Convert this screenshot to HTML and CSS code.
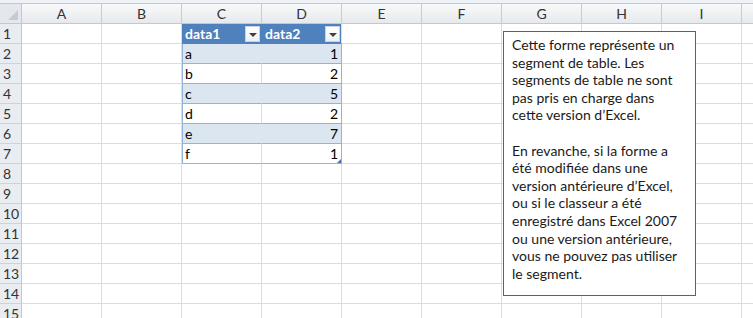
FILE: index.html
```html
<!DOCTYPE html>
<html lang="fr">
<head>
<meta charset="utf-8">
<title>Feuille</title>
<link rel="stylesheet" href="styles.css">
</head>
<body>
<div class="sheet">
  <div class="topstrip"></div>
  <div class="grid">
    <div class="corner"><span class="tri"></span></div>
    <div class="colh">A</div><div class="colh">B</div><div class="colh">C</div><div class="colh">D</div><div class="colh">E</div><div class="colh">F</div><div class="colh">G</div><div class="colh">H</div><div class="colh">I</div><div class="colh"></div>

    <div class="rowh">1</div><div class="cell"></div><div class="cell"></div>
    <div class="cell th tl"><span>data1</span><span class="dd"></span></div>
    <div class="cell th tr"><span>data2</span><span class="dd"></span></div>
    <div class="cell"></div><div class="cell"></div><div class="cell"></div><div class="cell"></div><div class="cell"></div><div class="cell"></div>

    <div class="rowh">2</div><div class="cell"></div><div class="cell"></div>
    <div class="cell td band tl">a</div><div class="cell td band num tr">1</div>
    <div class="cell"></div><div class="cell"></div><div class="cell"></div><div class="cell"></div><div class="cell"></div><div class="cell"></div>

    <div class="rowh">3</div><div class="cell"></div><div class="cell"></div>
    <div class="cell td tl">b</div><div class="cell td num tr">2</div>
    <div class="cell"></div><div class="cell"></div><div class="cell"></div><div class="cell"></div><div class="cell"></div><div class="cell"></div>

    <div class="rowh">4</div><div class="cell"></div><div class="cell"></div>
    <div class="cell td band tl">c</div><div class="cell td band num tr">5</div>
    <div class="cell"></div><div class="cell"></div><div class="cell"></div><div class="cell"></div><div class="cell"></div><div class="cell"></div>

    <div class="rowh">5</div><div class="cell"></div><div class="cell"></div>
    <div class="cell td tl">d</div><div class="cell td num tr">2</div>
    <div class="cell"></div><div class="cell"></div><div class="cell"></div><div class="cell"></div><div class="cell"></div><div class="cell"></div>

    <div class="rowh">6</div><div class="cell"></div><div class="cell"></div>
    <div class="cell td band tl">e</div><div class="cell td band num tr">7</div>
    <div class="cell"></div><div class="cell"></div><div class="cell"></div><div class="cell"></div><div class="cell"></div><div class="cell"></div>

    <div class="rowh">7</div><div class="cell"></div><div class="cell"></div>
    <div class="cell td tl">f</div><div class="cell td num tr last">1<span class="handle"></span></div>
    <div class="cell"></div><div class="cell"></div><div class="cell"></div><div class="cell"></div><div class="cell"></div><div class="cell"></div>

    <div class="rowh">8</div><div class="cell"></div><div class="cell"></div><div class="cell"></div><div class="cell"></div><div class="cell"></div><div class="cell"></div><div class="cell"></div><div class="cell"></div><div class="cell"></div><div class="cell"></div>
    <div class="rowh">9</div><div class="cell"></div><div class="cell"></div><div class="cell"></div><div class="cell"></div><div class="cell"></div><div class="cell"></div><div class="cell"></div><div class="cell"></div><div class="cell"></div><div class="cell"></div>
    <div class="rowh">10</div><div class="cell"></div><div class="cell"></div><div class="cell"></div><div class="cell"></div><div class="cell"></div><div class="cell"></div><div class="cell"></div><div class="cell"></div><div class="cell"></div><div class="cell"></div>
    <div class="rowh">11</div><div class="cell"></div><div class="cell"></div><div class="cell"></div><div class="cell"></div><div class="cell"></div><div class="cell"></div><div class="cell"></div><div class="cell"></div><div class="cell"></div><div class="cell"></div>
    <div class="rowh">12</div><div class="cell"></div><div class="cell"></div><div class="cell"></div><div class="cell"></div><div class="cell"></div><div class="cell"></div><div class="cell"></div><div class="cell"></div><div class="cell"></div><div class="cell"></div>
    <div class="rowh">13</div><div class="cell"></div><div class="cell"></div><div class="cell"></div><div class="cell"></div><div class="cell"></div><div class="cell"></div><div class="cell"></div><div class="cell"></div><div class="cell"></div><div class="cell"></div>
    <div class="rowh">14</div><div class="cell"></div><div class="cell"></div><div class="cell"></div><div class="cell"></div><div class="cell"></div><div class="cell"></div><div class="cell"></div><div class="cell"></div><div class="cell"></div><div class="cell"></div>
    <div class="rowh">15</div><div class="cell"></div><div class="cell"></div><div class="cell"></div><div class="cell"></div><div class="cell"></div><div class="cell"></div><div class="cell"></div><div class="cell"></div><div class="cell"></div><div class="cell"></div>
  </div>

  <div class="shape">
    <p>Cette forme représente un<br>segment de table. Les<br>segments de table ne sont<br>pas pris en charge dans<br>cette version d’Excel.</p>
    <p>En revanche, si la forme a<br>été modifiée dans une<br>version antérieure d’Excel,<br>ou si le classeur a été<br>enregistré dans Excel 2007<br>ou une version antérieure,<br>vous ne pouvez pas utiliser<br>le segment.</p>
  </div>
</div>
</body>
</html>
```
FILE: styles.css
```css
* { box-sizing: border-box; }
html, body { margin: 0; padding: 0; background: #fff; }
body { width: 753px; height: 318px; overflow: hidden; font-family: "Lato", "Open Sans", sans-serif; }

.sheet { position: relative; width: 753px; height: 318px; overflow: hidden; }

.topstrip { height: 4px; background: #eef1f5; border-bottom: 1px solid #c3c8ce; }

.grid {
  display: grid;
  grid-template-columns: 22px repeat(10, 80px);
  grid-template-rows: 20px repeat(15, 20px);
}

.corner {
  position: relative;
  background: #e4e8ed;
  border-right: 1px solid #c3c8ce;
  border-bottom: 1px solid #c3c8ce;
}
.corner .tri {
  position: absolute; right: 3px; bottom: 3px;
  width: 0; height: 0;
  border-left: 10px solid transparent;
  border-bottom: 10px solid #c6cbd1;
}

.colh {
  background: linear-gradient(#f8f9fa, #e6e9ed);
  border-right: 1px solid #c9cdd2;
  border-bottom: 1px solid #c3c8ce;
  color: #333;
  font-size: 14px;
  display: flex; align-items: center; justify-content: center;
}

.rowh {
  background: #e9ecf0;
  border-right: 1px solid #c3c8ce;
  border-bottom: 1px solid #cfd3d8;
  color: #333;
  font-size: 14px;
  display: flex; align-items: center; padding-left: 3px;
}

.cell {
  border-right: 1px solid #dadcdd;
  border-bottom: 1px solid #dadcdd;
  font-size: 14px;
  color: #000;
  display: flex; align-items: center;
  padding: 0 3px;
  white-space: nowrap;
}

.th {
  background: #4f81bd;
  color: #fff;
  font-weight: bold;
  justify-content: space-between;
  padding-right: 1px;
  border-right-color: #4f81bd;
  border-bottom-color: #4f81bd;
}
.th.tr { border-right-color: #dadcdd; }
.th.tl { box-shadow: inset 1px 0 #4f81bd; }

.dd {
  position: relative;
  width: 15px; height: 16px;
  background: linear-gradient(#ffffff, #eef0f3);
  border: 1px solid #c9d3df;
}
.dd::after {
  content: "";
  position: absolute; left: 3px; top: 6px;
  border-left: 4px solid transparent;
  border-right: 4px solid transparent;
  border-top: 4px solid #404040;
}

.td { border-bottom-color: #95b3d7; }
.td.band { background: #dce6f1; border-right-color: #dce6f1; }
.td.band.tr { border-right-color: #95b3d7; }
.td.tr { border-right-color: #95b3d7; }
.td.tl { box-shadow: inset 1px 0 #95b3d7; }
.num { justify-content: flex-end; padding-right: 3px; }
.last { position: relative; }
.handle {
  position: absolute; right: 0; bottom: 0;
  width: 0; height: 0;
  border-left: 4px solid transparent;
  border-bottom: 4px solid #4f6fa8;
}

.shape {
  position: absolute;
  left: 503px; top: 31px;
  width: 193px; height: 265px;
  background: #fff;
  border: 1px solid #3f7b35;
  padding: 4px 0 0 8px;
  font-family: "Lato", "Open Sans", sans-serif;
  font-size: 14px;
  line-height: 17.6px;
  color: #1a1a1a;
  white-space: nowrap;
}
.shape p { margin: 0 0 17.6px 0; }
```
